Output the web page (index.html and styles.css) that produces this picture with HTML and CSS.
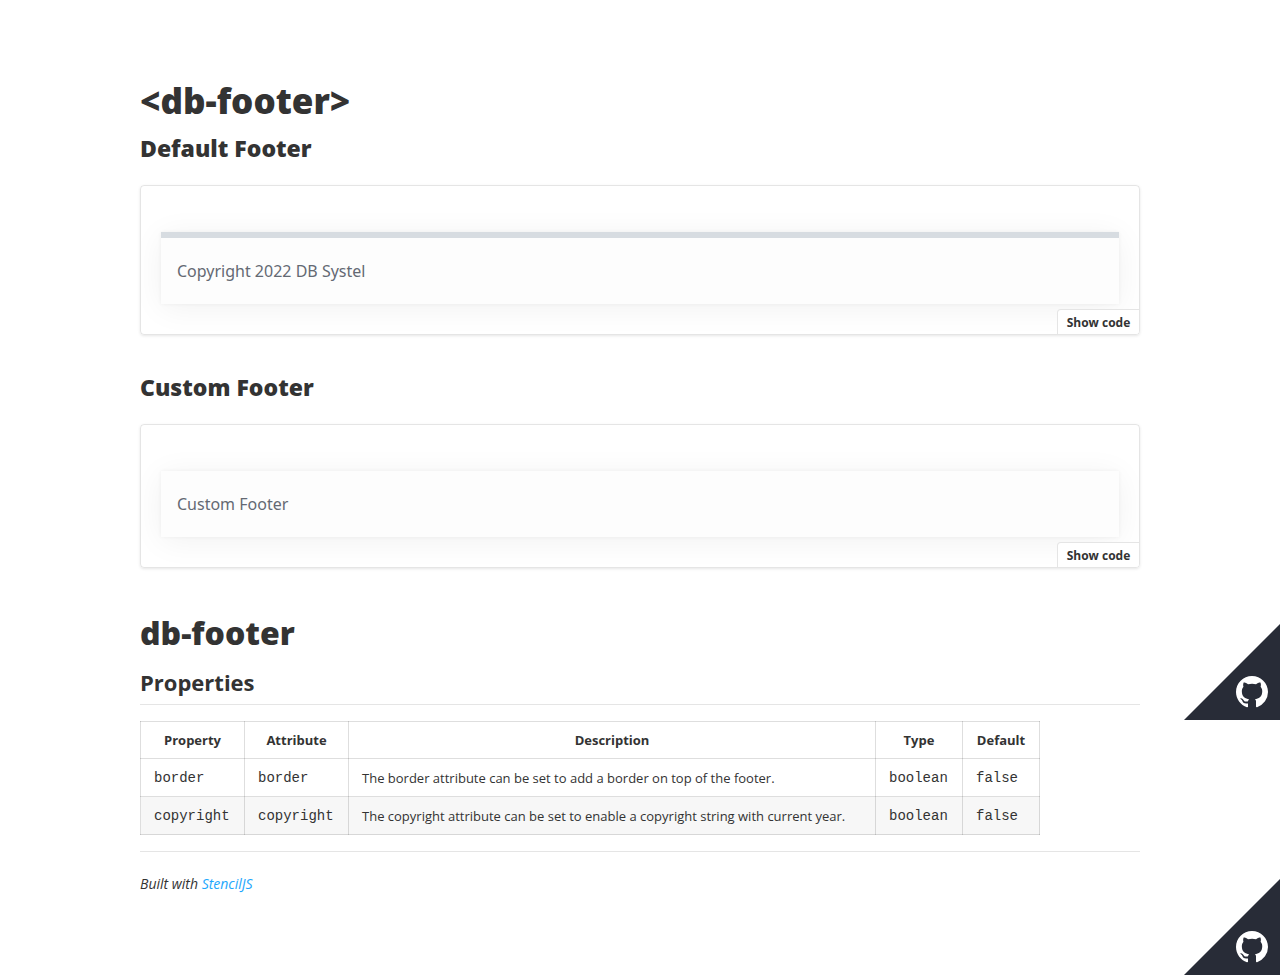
FILE: index.html
```html
<!DOCTYPE html>
<html lang="en">
<head>
<meta charset="utf-8">
<meta name="viewport" content="width=device-width, initial-scale=1">
<title>db-footer</title>
<link rel="stylesheet" href="styles.css">
</head>
<body>
<svg class="sprite" aria-hidden="true">
  <symbol id="github" viewBox="0 0 16 16">
    <path d="M8 0C3.58 0 0 3.58 0 8c0 3.54 2.29 6.53 5.47 7.59.4.07.55-.17.55-.38 0-.19-.01-.82-.01-1.49-2.01.37-2.53-.49-2.69-.94-.09-.23-.48-.94-.82-1.13-.28-.15-.68-.52-.01-.53.63-.01 1.08.58 1.23.82.72 1.21 1.87.87 2.33.66.07-.52.28-.87.51-1.07-1.78-.2-3.64-.89-3.64-3.95 0-.87.31-1.59.82-2.15-.08-.2-.36-1.02.08-2.12 0 0 .67-.21 2.2.82.64-.18 1.32-.27 2-.27s1.36.09 2 .27c1.53-1.04 2.2-.82 2.2-.82.44 1.1.16 1.92.08 2.12.51.56.82 1.27.82 2.15 0 3.07-1.87 3.75-3.65 3.95.29.25.54.73.54 1.48 0 1.07-.01 1.93-.01 2.2 0 .21.15.46.55.38A8.01 8.01 0 0 0 16 8c0-4.42-3.58-8-8-8z"/>
  </symbol>
</svg>
<main class="docs">
  <h1 class="title">&lt;db-footer&gt;</h1>
  <h2 class="story-title">Default Footer</h2>
  <section class="preview">
    <footer class="db-footer db-footer-border">Copyright 2022 DB Systel</footer>
    <button class="show-code" type="button">Show code</button>
  </section>
  <h2 class="story-title">Custom Footer</h2>
  <section class="preview">
    <footer class="db-footer">Custom Footer</footer>
    <button class="show-code" type="button">Show code</button>
  </section>
  <h1 class="readme-title">db-footer</h1>
  <h2 class="readme-heading">Properties</h2>
  <table class="props">
    <colgroup><col class="col-name"><col class="col-name"><col class="col-text"><col class="col-type"><col class="col-default"></colgroup>
    <thead>
      <tr><th>Property</th><th>Attribute</th><th>Description</th><th>Type</th><th>Default</th></tr>
    </thead>
    <tbody>
      <tr><td><code>border</code></td><td><code>border</code></td><td>The border attribute can be set to add a border on top of the footer.</td><td><code>boolean</code></td><td><code>false</code></td></tr>
      <tr><td><code>copyright</code></td><td><code>copyright</code></td><td>The copyright attribute can be set to enable a copyright string with current year.</td><td><code>boolean</code></td><td><code>false</code></td></tr>
    </tbody>
  </table>
  <hr class="rule">
  <p class="built"><em>Built with <a href="https://stenciljs.com/">StencilJS</a></em></p>
</main>
<a class="corner corner-upper" href="#" aria-label="View on GitHub"><svg class="mark"><use href="#github"/></svg></a>
<a class="corner corner-lower" href="#" aria-label="View on GitHub"><svg class="mark"><use href="#github"/></svg></a>
</body>
</html>
```
FILE: styles.css
```css
* { box-sizing: border-box; }
body {
  position: relative;
  min-height: 100vh;
  margin: 0;
  padding: 80px 20px 79px;
  background: #fff;
  color: #333;
  font-family: "Open Sans", "Noto Sans", sans-serif;
  font-size: 14px;
}
.sprite { position: absolute; width: 0; height: 0; }
.docs { max-width: 1000px; margin: 0 auto; }

.title, .story-title, .readme-title { font-weight: 800; }
.title { margin: 0; font-size: 35px; line-height: 42px; }
.story-title { margin: 10px 0 20px; font-size: 23px; line-height: 33px; }

.preview {
  position: relative;
  margin: 0 0 36px;
  padding: 46px 20px 30px;
  overflow: hidden;
  border: 1px solid rgba(0, 0, 0, 0.1);
  border-radius: 4px;
  box-shadow: 0 1px 3px rgba(0, 0, 0, 0.1);
}
.db-footer {
  padding: 20px 16px;
  background: #fdfdfd;
  box-shadow: 0 0 4px rgba(0, 0, 0, 0.05), 0 4px 32px rgba(0, 0, 0, 0.06);
  color: #646973;
  font-family: "Noto Sans", sans-serif;
  font-size: 16px;
  line-height: 26px;
}
.db-footer-border { border-top: 6px solid #d7dce1; }
.show-code {
  position: absolute;
  right: 0;
  bottom: 0;
  width: 82px;
  height: 25px;
  padding: 2px 0 0;
  border: solid rgba(0, 0, 0, 0.1);
  border-width: 1px 0 0 1px;
  border-radius: 4px 0 0 0;
  background: #fff;
  color: #333;
  font: 700 12px/16px "Open Sans", sans-serif;
}

.readme-title { margin: 44px 0 12px; font-size: 32px; line-height: 42px; }
.readme-heading {
  margin: 0 0 16px;
  padding-bottom: 6px;
  border-bottom: 1px solid rgba(0, 0, 0, 0.1);
  font-size: 22px;
  font-weight: 700;
  line-height: 32px;
}
.props { border-collapse: collapse; font-size: 13px; line-height: 24px; }
.col-name { width: 104px; }
.col-text { width: 527px; }
.col-type { width: 87px; }
.col-default { width: 77px; }
.props th, .props td { padding: 6px 13px; border: 1px solid rgba(0, 0, 0, 0.13); }
.props th { font-weight: 700; }
.props td { height: 38px; text-align: left; }
.props tbody tr:nth-child(even) { background: #f7f7f7; }
.props code { font-family: "Liberation Mono", monospace; font-size: 14px; }
.rule { margin: 16px 0 20px; border: 0; border-top: 1px solid rgba(0, 0, 0, 0.1); }
.built { margin: 0; line-height: 24px; }
.built a { color: #1ea7fd; text-decoration: none; }

.corner {
  position: absolute;
  right: 0;
  width: 96px;
  height: 96px;
  padding: 52px 12px 12px 52px;
  background: #282c37;
  clip-path: polygon(100% 0, 100% 100%, 0 100%);
}
.corner-upper { top: 624px; }
.corner-lower { bottom: 0; }
.mark { display: block; width: 32px; height: 32px; fill: #fff; }
```
